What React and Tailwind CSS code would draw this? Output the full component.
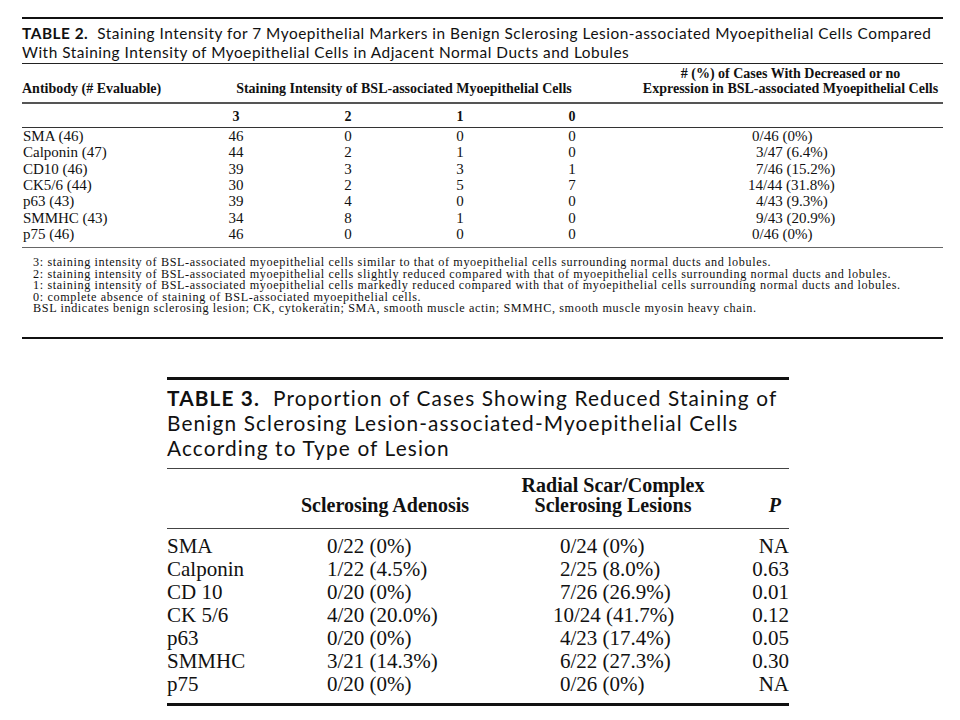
import React from "react";

const serif = { fontFamily: '"Liberation Serif", "Times New Roman", serif' };
const sans = { fontFamily: 'Lato, "Open Sans", sans-serif' };

const t2rows = [
  ["SMA (46)", "46", "0", "0", "0", "0", "/46 (0%)", "pl-[4px]"],
  ["Calponin (47)", "44", "2", "1", "0", "3", "/47 (6.4%)", "pl-[8px]"],
  ["CD10 (46)", "39", "3", "3", "1", "7", "/46 (15.2%)", "pl-[8px]"],
  ["CK5/6 (44)", "30", "2", "5", "7", "14", "/44 (31.8%)", "pl-0"],
  ["p63 (43)", "39", "4", "0", "0", "4", "/43 (9.3%)", "pl-[8px]"],
  ["SMMHC (43)", "34", "8", "1", "0", "9", "/43 (20.9%)", "pl-[8px]"],
  ["p75 (46)", "46", "0", "0", "0", "0", "/46 (0%)", "pl-[4px]"],
];

const t3rows = [
  ["SMA", "0/22 (0%)", "0/24 (0%)", "pl-[7px]", "NA"],
  ["Calponin", "1/22 (4.5%)", "2/25 (8.0%)", "pl-[7px]", "0.63"],
  ["CD 10", "0/20 (0%)", "7/26 (26.9%)", "pl-[7px]", "0.01"],
  ["CK 5/6", "4/20 (20.0%)", "10/24 (41.7%)", "pl-0", "0.12"],
  ["p63", "0/20 (0%)", "4/23 (17.4%)", "pl-[7px]", "0.05"],
  ["SMMHC", "3/21 (14.3%)", "6/22 (27.3%)", "pl-[7px]", "0.30"],
  ["p75", "0/20 (0%)", "0/26 (0%)", "pl-[7px]", "NA"],
];

function Table2() {
  return (
    <div className="ml-[22px] mt-[17px] w-[921px] text-[#111]">
      <div className="h-[2px] bg-[#111]" />
      <div className="pt-[5px] pb-[2px] text-[15.4px] leading-[18.5px] tracking-[0.52px]" style={sans}>
        <div className="h-[18.5px] whitespace-nowrap">
          <span className="font-bold">TABLE 2.</span>&nbsp; Staining Intensity for 7 Myoepithelial Markers in Benign Sclerosing Lesion-associated Myoepithelial Cells Compared
        </div>
        <div className="h-[18.5px] whitespace-nowrap">With Staining Intensity of Myoepithelial Cells in Adjacent Normal Ducts and Lobules</div>
      </div>
      <div className="h-[1px] bg-[#222]" />
      <div className="flex h-[38px] items-end pb-[6px] text-[14px] leading-[15px] font-bold" style={serif}>
        <div className="w-[158px]">Antibody (# Evaluable)</div>
        <div className="w-[448px] text-center">Staining Intensity of BSL-associated Myoepithelial Cells</div>
        <div className="w-[10px]" />
        <div className="w-[305px] text-center">
          <div># (%) of Cases With Decreased or no</div>
          <div>Expression in BSL-associated Myoepithelial Cells</div>
        </div>
      </div>
      <div className="h-[2px] bg-[#555]" />
      <div className="flex h-[23px] items-center pt-[2px] text-[14px] font-bold" style={serif}>
        <div className="w-[158px]" />
        <div className="w-[112px] text-center">3</div>
        <div className="w-[112px] text-center">2</div>
        <div className="w-[112px] text-center">1</div>
        <div className="w-[112px] text-center">0</div>
      </div>
      <div className="h-[1px] bg-[#333]" />
      <div className="pb-[5px] text-[15px]" style={serif}>
        {t2rows.map((r) => (
          <div key={r[0]} className="flex h-[16.3px] items-center leading-[16px]">
            <div className="w-[158px] pl-[1px]">{r[0]}</div>
            <div className="w-[112px] text-center">{r[1]}</div>
            <div className="w-[112px] text-center">{r[2]}</div>
            <div className="w-[112px] text-center">{r[3]}</div>
            <div className="w-[112px] text-center">{r[4]}</div>
            <div className="w-[120px]" />
            <div className={r[7]}>
              {r[5]}
              {r[6]}
            </div>
          </div>
        ))}
      </div>
      <div className="h-[1px] bg-[#666]" />
      <div className="pl-[11px] pt-[9px] pb-[22px] text-[12.2px] leading-[11.5px] tracking-[0.62px]" style={serif}>
        <div className="h-[11.5px]">3: staining intensity of BSL-associated myoepithelial cells similar to that of myoepithelial cells surrounding normal ducts and lobules.</div>
        <div className="h-[11.5px]">2: staining intensity of BSL-associated myoepithelial cells slightly reduced compared with that of myoepithelial cells surrounding normal ducts and lobules.</div>
        <div className="h-[11.5px]">1: staining intensity of BSL-associated myoepithelial cells markedly reduced compared with that of myoepithelial cells surrounding normal ducts and lobules.</div>
        <div className="h-[11.5px]">0: complete absence of staining of BSL-associated myoepithelial cells.</div>
        <div className="h-[11.5px]">BSL indicates benign sclerosing lesion; CK, cytokeratin; SMA, smooth muscle actin; SMMHC, smooth muscle myosin heavy chain.</div>
      </div>
      <div className="h-[2px] bg-[#111]" />
    </div>
  );
}

function Table3() {
  return (
    <div className="ml-[167px] mt-[38px] w-[622px] text-[#111]">
      <div className="h-[3px] bg-[#111]" />
      <div className="pt-[5px] pb-[8px] text-[20.8px] leading-[25px] tracking-[1.15px]" style={sans}>
        <div className="h-[25px] whitespace-nowrap">
          <span className="font-bold">TABLE 3.</span>&nbsp; Proportion of Cases Showing Reduced Staining of
        </div>
        <div className="h-[25px] whitespace-nowrap">Benign Sclerosing Lesion-associated-Myoepithelial Cells</div>
        <div className="h-[25px] whitespace-nowrap">According to Type of Lesion</div>
      </div>
      <div className="h-[1px] bg-[#444]" />
      <div className="flex h-[59px] items-end pb-[13px] text-[20px] leading-[20px] font-bold" style={serif}>
        <div className="w-[133px]" />
        <div className="w-[170px] text-center">Sclerosing Adenosis</div>
        <div className="w-[43px]" />
        <div className="w-[200px] text-center">
          <div>Radial Scar/Complex</div>
          <div>Sclerosing Lesions</div>
        </div>
        <div className="flex-1 pr-[8px] text-right italic">P</div>
      </div>
      <div className="h-[1px] bg-[#444]" />
      <div className="pt-[6px] pb-[7px] text-[21px]" style={serif}>
        {t3rows.map((r) => (
          <div key={r[0]} className="flex h-[23px] items-center leading-[23px]">
            <div className="w-[160px]">{r[0]}</div>
            <div className="w-[226px]">{r[1]}</div>
            <div className={"w-[180px] " + (r[3] === "pl-0" ? "pl-0" : "pl-[7px]")}>{r[2]}</div>
            <div className="flex-1 text-right">{r[4]}</div>
          </div>
        ))}
      </div>
      <div className="h-[3px] bg-[#111]" />
    </div>
  );
}

export default function App() {
  return (
    <div className="h-[720px] w-[960px] overflow-hidden bg-white">
      <Table2 />
      <Table3 />
    </div>
  );
}
